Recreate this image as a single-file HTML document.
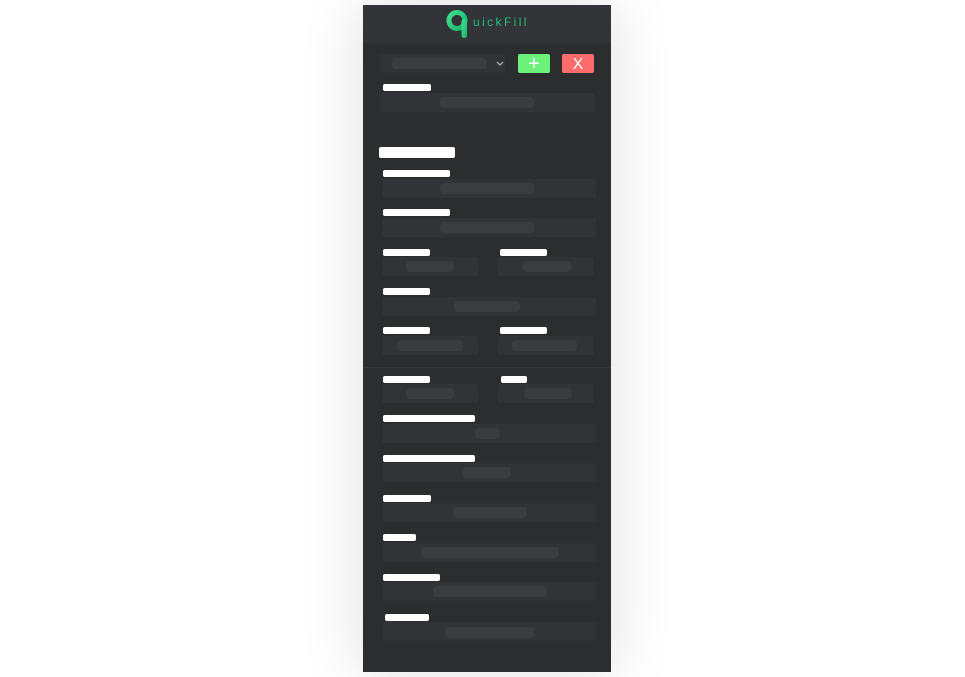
<!DOCTYPE html>
<html><head><meta charset="utf-8"><style>
*{margin:0;padding:0;box-sizing:border-box}
body{width:965px;height:677px;background:#fff;position:relative;overflow:hidden;font-family:"Liberation Sans",sans-serif}
#p{position:absolute;left:363px;top:5px;width:248px;height:667px;background:#2c2d2f;box-shadow:0 0 60px rgba(0,0,0,.13)}
#h{position:absolute;left:363px;top:5px;width:248px;height:38px;background:#333437}
.a{position:absolute}
.l{position:absolute;background:#fff;border-radius:2px;height:7px}
.i{position:absolute;background:#323336;border-radius:3px;height:19px}
.q{position:absolute;background:#3a3c3f;border-radius:4px;height:11px}
</style></head><body>
<div id="p"></div>
<div id="h"></div>
<div class="a" style="left:446px;top:9px;width:24px;height:29px">
<svg width="24" height="29" viewBox="0 0 24 29"><defs><linearGradient id="g" x1="0" y1="0" x2="1" y2="1"><stop offset="0" stop-color="#3fe08f"/><stop offset="1" stop-color="#14b86a"/></linearGradient></defs><circle cx="11" cy="11.5" r="8" fill="none" stroke="url(#g)" stroke-width="5"/><rect x="15.5" y="10" width="5.5" height="19" rx="2.5" fill="url(#g)"/></svg></div>
<div class="a" style="left:473px;top:15px;font-size:12px;letter-spacing:2.4px;color:#1fbf77">uickFill</div>
<div class="i" style="left:380px;top:54px;width:126px"></div>
<div class="q" style="left:392px;top:58px;width:95px;height:11px"></div>
<svg class="a" style="left:496px;top:61px" width="8" height="5" viewBox="0 0 8 5"><path d="M1 1l3 3 3-3" fill="none" stroke="#aaa" stroke-width="1.3"/></svg>
<div class="a" style="left:518px;top:54px;width:32px;height:19px;background:#6cf17b;border-radius:2px;color:#fff;font-size:20px;line-height:20px;text-align:center">+</div>
<div class="a" style="left:562px;top:54px;width:32px;height:19px;background:#fe6b6c;border-radius:2px;color:#fff;font-size:16px;line-height:21px;text-align:center">X</div>

<div class="l" style="left:383px;top:84px;width:48px"></div>
<div class="i" style="left:380px;top:93px;width:215px"></div><div class="q" style="left:440px;top:97px;width:94px"></div>

<div class="l" style="left:379px;top:147px;width:76px;height:11px"></div>

<div class="l" style="left:383px;top:170px;width:67px"></div>
<div class="i" style="left:382px;top:179px;width:214px"></div><div class="q" style="left:440px;top:183px;width:94px"></div>
<div class="l" style="left:383px;top:209px;width:67px"></div>
<div class="i" style="left:382px;top:218px;width:214px"></div><div class="q" style="left:440px;top:222px;width:94px"></div>

<div class="l" style="left:383px;top:249px;width:47px"></div><div class="l" style="left:500px;top:249px;width:47px"></div>
<div class="i" style="left:382px;top:257px;width:96px"></div><div class="q" style="left:406px;top:261px;width:48px"></div>
<div class="i" style="left:498px;top:257px;width:96px"></div><div class="q" style="left:523px;top:261px;width:48px"></div>

<div class="l" style="left:383px;top:288px;width:47px"></div>
<div class="i" style="left:382px;top:297px;width:214px"></div><div class="q" style="left:454px;top:301px;width:66px"></div>

<div class="l" style="left:383px;top:327px;width:47px"></div><div class="l" style="left:500px;top:327px;width:47px"></div>
<div class="i" style="left:382px;top:336px;width:96px"></div><div class="q" style="left:397px;top:340px;width:66px"></div>
<div class="i" style="left:498px;top:336px;width:96px"></div><div class="q" style="left:512px;top:340px;width:65px"></div>

<div class="a" style="left:363px;top:367px;width:248px;height:1px;background:#36373a"></div>

<div class="l" style="left:383px;top:376px;width:47px"></div><div class="l" style="left:501px;top:376px;width:26px"></div>
<div class="i" style="left:382px;top:384px;width:96px"></div><div class="q" style="left:406px;top:388px;width:48px"></div>
<div class="i" style="left:498px;top:384px;width:96px"></div><div class="q" style="left:524px;top:388px;width:48px"></div>

<div class="l" style="left:383px;top:415px;width:92px"></div>
<div class="i" style="left:382px;top:424px;width:214px"></div><div class="q" style="left:475px;top:428px;width:25px"></div>
<div class="l" style="left:383px;top:455px;width:92px"></div>
<div class="i" style="left:382px;top:463px;width:214px"></div><div class="q" style="left:463px;top:467px;width:48px"></div>
<div class="l" style="left:383px;top:495px;width:48px"></div>
<div class="i" style="left:382px;top:503px;width:214px"></div><div class="q" style="left:453px;top:507px;width:74px"></div>
<div class="l" style="left:383px;top:534px;width:33px"></div>
<div class="i" style="left:382px;top:543px;width:214px"></div><div class="q" style="left:421px;top:547px;width:138px"></div>
<div class="l" style="left:383px;top:574px;width:57px"></div>
<div class="i" style="left:382px;top:582px;width:214px"></div><div class="q" style="left:433px;top:586px;width:114px"></div>
<div class="l" style="left:385px;top:614px;width:44px"></div>
<div class="i" style="left:382px;top:622px;width:214px"></div><div class="q" style="left:445px;top:627px;width:89px"></div>
</body></html>
